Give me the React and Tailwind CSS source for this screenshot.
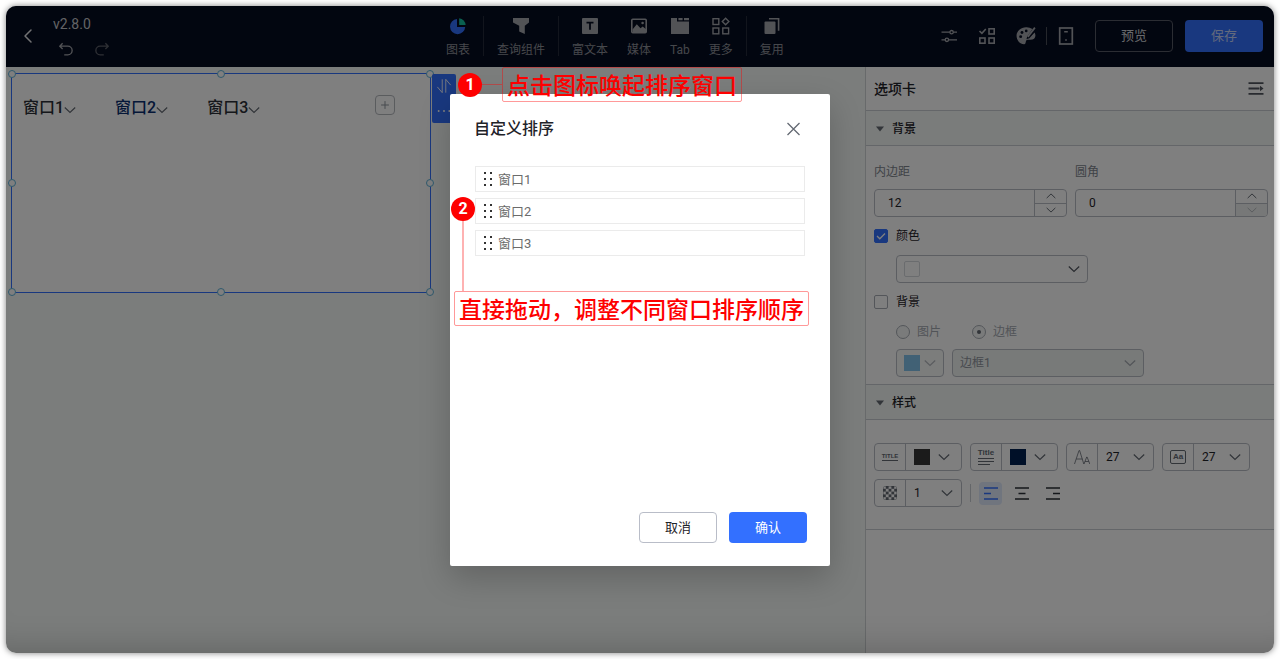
import { useState } from 'react';
import { ChevronLeft, Plus } from 'lucide-react';

const windows = ['窗口1', '窗口2', '窗口3'];

function Svg({ size = 18, className, children }) {
  return (
    <svg width={size} height={size} viewBox="0 0 18 18" fill="none" className={className} aria-hidden="true">
      {children}
    </svg>
  );
}

function Arrow({ size = 12, up, className }) {
  return (
    <svg width={size} height={size} viewBox="0 0 12 12" fill="none" className={className} aria-hidden="true">
      <path d={up ? 'M.8 8.5L6 3.5l5.2 5' : 'M.8 3.5L6 8.5l5.2-5'} stroke="currentColor" strokeWidth="1.2" />
    </svg>
  );
}

const ChartIcon = () => (
  <Svg>
    <path d="M8 2A7.6 7.6 0 1 0 16.2 10H8z" fill="#3370ff" />
    <path d="M10.2 1.2V8h6.4a7 7 0 0 0-6.4-6.8z" fill="#14c0a0" />
  </Svg>
);

const FilterIcon = () => (
  <Svg><path d="M1 1h16v4.4l-4.2 3.4V17l-5.6-2.6V8.8L1 5.4z" fill="currentColor" /></Svg>
);

const TextIcon = () => (
  <Svg>
    <rect x="1" y="1" width="16" height="16" rx="1" fill="currentColor" />
    <path d="M5.5 5.7h7M9 5.7v7" stroke="#050c20" strokeWidth="1.8" />
  </Svg>
);

const MediaIcon = () => (
  <Svg>
    <rect x="1.8" y="2.3" width="14.4" height="13.4" rx="1" stroke="currentColor" strokeWidth="1.6" />
    <path d="M2.5 12.5l4.3-5.2 3.7 4 2.2-1.8 3.3 2.8V16H2.5z" fill="currentColor" />
    <circle cx="12.6" cy="6" r="1.3" fill="currentColor" />
  </Svg>
);

const TabIcon = () => (
  <Svg><path d="M0 1h6v3.5h12V17H0zM7.4 1h4.2v2.2H7.4zM13 1h5v2.2h-5z" fill="currentColor" /></Svg>
);

const MoreIcon = () => (
  <Svg>
    <g stroke="currentColor" strokeWidth="1.4">
      <rect x="1" y="1.7" width="5.8" height="5.8" />
      <rect x="1" y="11" width="5.8" height="5.8" />
      <rect x="10.8" y="11" width="5.8" height="5.8" />
      <path d="M13.6 1.2l3.3 3.3-3.3 3.3-3.3-3.3z" />
    </g>
  </Svg>
);

const ReuseIcon = () => (
  <Svg>
    <rect x="1.5" y="4.5" width="11" height="12.5" rx="1" fill="currentColor" />
    <path d="M6 1.8h9.6v12" stroke="currentColor" strokeWidth="1.6" />
  </Svg>
);

const toolGroups = [
  [{ label: '图表', Icon: ChartIcon }],
  [{ label: '查询组件', Icon: FilterIcon }],
  [
    { label: '富文本', Icon: TextIcon },
    { label: '媒体', Icon: MediaIcon },
    { label: 'Tab', Icon: TabIcon },
    { label: '更多', Icon: MoreIcon },
  ],
  [{ label: '复用', Icon: ReuseIcon }],
];

function Header() {
  return (
    <header className="flex h-[61px] shrink-0 items-center bg-[#050c20] pb-0.5 pr-[11px] text-[#a4a6ad]">
      <div className="flex w-1/3 items-center pl-2.5">
        <button aria-label="返回" className="text-[#e4e5e8]">
          <ChevronLeft size={24} strokeWidth={1.5} />
        </button>
        <div className="ml-3 flex flex-col gap-2">
          <span className="pl-px text-sm leading-5 text-[#c4c6cb]">v2.8.0</span>
          <div className="flex gap-5 pl-1.5">
            <button aria-label="撤销">
              <Svg size={16}>
                <path d="M5.2 1.5L2 4.7l3.2 3.2M2 4.7h9a4.9 4.9 0 0 1 0 9.8H7" stroke="currentColor" strokeWidth="1.5" />
              </Svg>
            </button>
            <button aria-label="重做" className="text-[#5c5f69]">
              <Svg size={16}>
                <path d="M12.8 1.5L16 4.7l-3.2 3.2M16 4.7H7a4.9 4.9 0 0 0 0 9.8h4" stroke="currentColor" strokeWidth="1.5" />
              </Svg>
            </button>
          </div>
        </div>
      </div>

      <nav className="flex items-center pl-[21px]">
        {toolGroups.map((group, i) => (
          <div
            key={i}
            className={i > 0 ? 'ml-[13px] flex h-10 items-center gap-[19px] border-l border-[#242a3b] pl-[13px]' : 'flex h-10 items-center'}
          >
            {group.map(({ label, Icon }) => (
              <button key={label} className="flex flex-col items-center gap-1.5 pt-1 text-xs leading-[18px] text-[#8d9098]">
                <span className="text-[#a4a6ad]"><Icon /></span>
                {label}
              </button>
            ))}
          </div>
        ))}
      </nav>

      <div className="ml-auto flex items-center">
        <div className="flex items-center gap-5">
          <button aria-label="设置">
            <Svg>
              <g stroke="currentColor" strokeWidth="1.3">
                <path d="M1.5 5.2h8.3M13.4 5.2H17M1.5 12.8h3.6M8.7 12.8H17" />
                <circle cx="11.6" cy="5.2" r="1.7" />
                <circle cx="6.9" cy="12.8" r="1.7" />
              </g>
            </Svg>
          </button>
          <button aria-label="组件">
            <Svg>
              <g stroke="currentColor" strokeWidth="1.6">
                <path d="M1.5 4l2.4 2.4L7.8 2" />
                <rect x="11" y="1.8" width="5.2" height="5.2" />
                <rect x="1.8" y="11" width="5.2" height="5.2" />
                <rect x="11" y="11" width="5.2" height="5.2" />
              </g>
            </Svg>
          </button>
          <button aria-label="主题">
            <Svg size={20}>
              <path d="M9 1.2C4.5 1.2.5 4.6.5 8.8c0 4 3 7.6 6.7 7.6 1.7 0 1.4-1.7 1.8-2.9.5-1.3 1.7-1.1 4-1.1 2.7 0 4.5-1.3 4.5-3.8 0-1-.3-2-.8-2.8L12 11l-2.6 1 .8-2.8 4.6-6.5A10 10 0 0 0 9 1.2z" fill="currentColor" />
              <path d="M10.6 9.8L17 1.5" stroke="currentColor" strokeWidth="1.6" />
              <g fill="#050c20">
                <circle cx="4.2" cy="9.6" r="1.3" />
                <circle cx="5.4" cy="5.9" r="1.3" />
                <circle cx="9.2" cy="4.4" r="1.2" />
              </g>
            </Svg>
          </button>
        </div>
        <div className="mx-2.5 h-[18px] border-l border-[#4a4e59]" />
        <button aria-label="移动端">
          <Svg>
            <rect x="2.7" y="1" width="12.6" height="16" stroke="currentColor" strokeWidth="1.7" />
            <path d="M7.2 4.8h3.6M8.2 13h1.6" stroke="currentColor" strokeWidth="1.5" />
          </Svg>
        </button>
        <button className="ml-5 h-8 w-[78px] rounded border border-[#565a66] text-[13px] text-[#d0d2d8]">预览</button>
        <button className="ml-3 h-8 w-[78px] rounded bg-[#3370ff] text-[13px] text-[#c6d4fb]">保存</button>
      </div>
    </header>
  );
}

const handles = [
  '-left-1 -top-1',
  'left-1/2 -ml-1 -top-1',
  '-right-1 -top-1',
  '-left-1 top-1/2 -mt-1',
  '-right-1 top-1/2 -mt-1',
  '-left-1 -bottom-1',
  'left-1/2 -ml-1 -bottom-1',
  '-right-1 -bottom-1',
];

function Canvas() {
  return (
    <main className="min-w-0 flex-1 bg-[#f6faf8] p-[5px]">
      <section className="relative mt-px h-[220px] w-[420px] border border-[#3370ff] bg-white px-[11px] pt-5">
        <div className="flex items-center">
          <div className="flex gap-[39px]">
            {windows.map((name, i) => (
              <button
                key={name}
                className={i === 1 ? 'flex items-center text-base font-medium leading-7 text-[#0a2f70]' : 'flex items-center text-base font-medium leading-7 text-[#2b2f36]'}
              >
                {name}
                <Arrow className="mt-1 text-[#646a73]" />
              </button>
            ))}
          </div>
          <button aria-label="添加窗口" className="mb-1.5 ml-auto mr-6 flex size-5 items-center justify-center rounded-sm border border-[#b4b8bd] text-[#8f959e]">
            <Plus size={12} strokeWidth={2} />
          </button>
        </div>
        {handles.map((pos) => (
          <span key={pos} className={`absolute size-2 rounded-full border border-[#5fb4dc] bg-white ${pos}`} />
        ))}
        <div className="absolute -right-[26px] top-0 flex h-[49px] w-6 flex-col items-center justify-between rounded-xs bg-[#3370ff] py-1 text-white">
          <button aria-label="排序">
            <Svg size={16}>
              <path d="M7 1.5v15L1.5 10M11 16.5v-15L16.5 8" stroke="currentColor" strokeWidth="1" />
            </Svg>
          </button>
          <button aria-label="更多操作">
            <Svg size={16}>
              <g fill="currentColor">
                <circle cx="3" cy="9" r="1.1" />
                <circle cx="9" cy="9" r="1.1" />
                <circle cx="15" cy="9" r="1.1" />
              </g>
            </Svg>
          </button>
        </div>
      </section>
    </main>
  );
}

function SectionTitle({ children }) {
  return (
    <button className="flex h-[35px] w-full items-center gap-2 border-b border-[#c9cdd2] bg-[#f4f8f6] pl-2.5 pt-px text-xs font-medium text-[#1f2329]">
      <svg width="8" height="6" viewBox="0 0 8 6" aria-hidden="true"><path d="M0 .5h8l-4 5z" fill="#646a73" /></svg>
      {children}
    </button>
  );
}

function NumberField({ id, label, initial }) {
  const [value, setValue] = useState(initial);

  return (
    <div className="flex-1">
      <label htmlFor={id} className="block text-xs leading-[18px] text-[#80858e]">{label}</label>
      <div className="mt-2 flex h-7 overflow-hidden rounded border border-[#b9bdc5]">
        <input
          id={id}
          value={value}
          onChange={(e) => setValue(Number(e.target.value) || 0)}
          className="w-full min-w-0 flex-1 pl-[13px] text-xs text-[#1f2329] outline-none"
        />
        <div className="flex w-8 flex-col border-l border-[#b9bdc5] text-[#646a73]">
          <button aria-label={`${label}增加`} onClick={() => setValue(value + 1)} className="flex flex-1 items-center justify-center">
            <Arrow up size={10} />
          </button>
          <button
            aria-label={`${label}减少`}
            disabled={value === 0}
            onClick={() => setValue(value - 1)}
            className="flex flex-1 items-center justify-center border-t border-[#b9bdc5] disabled:bg-[#eef1f0] disabled:text-[#b4b8bd]"
          >
            <Arrow size={10} />
          </button>
        </div>
      </div>
    </div>
  );
}

function Checkbox({ label, defaultChecked }) {
  return (
    <label className="flex h-[18px] items-center gap-2 text-xs text-[#1f2329]">
      <span className="relative flex size-3.5">
        <input
          type="checkbox"
          defaultChecked={defaultChecked}
          className="peer size-3.5 appearance-none rounded-xs border border-[#a8adb5] bg-white checked:border-[#3370ff] checked:bg-[#3370ff]"
        />
        <svg viewBox="0 0 14 14" className="pointer-events-none absolute inset-0 hidden peer-checked:block" aria-hidden="true">
          <path d="M3 7l2.8 2.8L11 4.5" fill="none" stroke="#fff" strokeWidth="1.3" />
        </svg>
      </span>
      {label}
    </label>
  );
}

function Radio({ label, defaultChecked }) {
  return (
    <label className="flex items-center gap-[7px] text-xs text-[#a3a8b0]">
      <input
        type="radio"
        name="bg-type"
        disabled
        defaultChecked={defaultChecked}
        className="flex size-3.5 appearance-none items-center justify-center rounded-full border border-[#a8adb5] bg-[#f4f6f6] before:size-1 before:rounded-full checked:before:bg-[#646a73]"
      />
      {label}
    </label>
  );
}

// icon cell on the left, value and arrow on the right
function StyleBox({ icon, label, color, options }) {
  return (
    <div className="flex h-7 w-[88px] rounded border border-[#b9bdc5]">
      <span className="flex w-[31px] shrink-0 items-center justify-center border-r border-[#b9bdc5] text-[#646a73]">{icon}</span>
      {color ? (
        <button aria-label={label} className="flex flex-1 items-center justify-between pl-2 pr-[11px]">
          <span className={`size-4 ${color}`} />
          <Arrow className="text-[#646a73]" />
        </button>
      ) : (
        <div className="relative flex flex-1">
          <select aria-label={label} className="w-full appearance-none pl-2 text-xs text-[#1f2329] outline-none">
            {options.map((o) => <option key={o}>{o}</option>)}
          </select>
          <Arrow className="pointer-events-none absolute right-2 top-[7px] text-[#646a73]" />
        </div>
      )}
    </div>
  );
}

const TitleIcon = () => (
  <span className="border-b border-[#646a73] font-['Liberation_Sans',sans-serif] text-[6px] font-bold leading-[7px]">TITLE</span>
);

const TitleLinesIcon = () => (
  <span className="flex flex-col items-start">
    <span className="font-['Liberation_Sans',sans-serif] text-[8px] font-bold leading-[8px]">Title</span>
    <svg width="16" height="8" viewBox="0 0 16 8" aria-hidden="true">
      <path d="M0 1.5h16M0 4.5h16M0 7.5h12" stroke="currentColor" />
    </svg>
  </span>
);

const FontSizeIcon = () => (
  <svg width="16" height="16" viewBox="0 0 16 16" fill="none" stroke="currentColor" strokeWidth=".8" aria-hidden="true">
    <path d="M.5 15L5 1.5h.6L9.8 15M2.2 10h6.2M10 15l2.7-7h.4l2.7 7M11 12.5h3.8" />
  </svg>
);

const BoxedFontIcon = () => (
  <span className="flex h-3.5 w-4 items-center justify-center rounded-xs border border-[#646a73] font-['Liberation_Sans',sans-serif] text-[8px] font-bold leading-none">Aa</span>
);

const OpacityIcon = () => {
  const cells = [];
  for (let y = 0; y < 5; y++) {
    for (let x = 0; x < 5; x++) {
      if ((x + y) % 2 === 1) cells.push(<rect key={`${x}${y}`} x={x * 2.8} y={y * 2.8} width="2.8" height="2.8" fill="currentColor" />);
    }
  }
  return (
    <svg width="14" height="14" viewBox="0 0 14 14" aria-hidden="true">
      {cells}
      <rect x=".5" y=".5" width="13" height="13" rx="1" fill="none" stroke="currentColor" strokeWidth=".4" />
    </svg>
  );
};

const aligns = [
  { label: '左对齐', d: 'M0 1h14M0 6.5h7M0 12h14' },
  { label: '居中', d: 'M0 1h14M3.5 6.5h7M0 12h14' },
  { label: '右对齐', d: 'M0 1h14M7 6.5h7M0 12h14' },
];

function SettingsPanel() {
  const [align, setAlign] = useState('左对齐');

  return (
    <aside className="w-[409px] shrink-0 border-l border-[#d0d4d6] bg-white">
      <div className="flex h-11 items-center justify-between border-b border-[#c9cdd2] pl-2 pr-2.5">
        <h2 className="text-sm font-medium text-[#1f2329]">选项卡</h2>
        <button aria-label="收起面板">
          <svg width="16" height="13" viewBox="0 0 16 13" fill="none" aria-hidden="true">
            <path d="M.5 1.2h15M.5 6.5h11M.5 11.8h15" stroke="#50555e" strokeWidth="1.8" />
            <path d="M12 3.8l3.5 2.7L12 9.2z" fill="#50555e" />
          </svg>
        </button>
      </div>

      <SectionTitle>背景</SectionTitle>
      <div className="border-b border-[#c9cdd2] pb-[7px] pl-2 pr-1.5 pt-[17px]">
        <div className="flex gap-2">
          <NumberField id="padding" label="内边距" initial={12} />
          <NumberField id="radius" label="圆角" initial={0} />
        </div>
        <div className="mt-2.5">
          <Checkbox label="颜色" defaultChecked />
        </div>
        <button aria-label="颜色" className="ml-[22px] mt-2.5 flex h-7 w-48 items-center justify-between rounded border border-[#b9bdc5] pl-[7px] pr-[7px]">
          <span className="size-4 rounded-xs border border-[#d5d8dc]" />
          <Arrow className="text-[#50555e]" />
        </button>
        <div className="mt-2.5">
          <Checkbox label="背景" />
        </div>
        <div className="ml-[22px] mt-3 flex h-[18px] items-center gap-[31px]">
          <Radio label="图片" />
          <Radio label="边框" defaultChecked />
        </div>
        <div className="ml-[22px] mt-2 flex gap-2">
          <button disabled aria-label="边框颜色" className="flex h-7 w-12 items-center justify-between rounded border border-[#b9bdc5] bg-[#f8faf9] pl-[7px] pr-[7px]">
            <span className="size-4 bg-[#82c3ea]" />
            <Arrow className="text-[#b4b8bd]" />
          </button>
          <div className="relative w-48">
            <select aria-label="边框" disabled className="h-7 w-full appearance-none rounded border border-[#b9bdc5] bg-[#f0f4f2] pl-[7px] text-xs text-[#8f959e]">
              <option>边框1</option>
            </select>
            <Arrow className="pointer-events-none absolute right-2 top-2 text-[#a3a8b0]" />
          </div>
        </div>
      </div>

      <SectionTitle>样式</SectionTitle>
      <div className="flex flex-wrap gap-2 border-b border-[#c9cdd2] pb-[22px] pl-2 pt-[23px]">
        <StyleBox icon={<TitleIcon />} label="标题颜色" color="bg-[#373737]" />
        <StyleBox icon={<TitleLinesIcon />} label="选中标题颜色" color="bg-[#002050]" />
        <StyleBox icon={<FontSizeIcon />} label="字号" options={[27, 28]} />
        <StyleBox icon={<BoxedFontIcon />} label="选中字号" options={[27, 28]} />
        <StyleBox icon={<OpacityIcon />} label="透明度" options={[1, 2]} />
        <div className="flex items-center gap-2">
          <div className="h-[18px] border-l border-[#c9cdd2]" />
          {aligns.map(({ label, d }) => (
            <button
              key={label}
              aria-label={label}
              onClick={() => setAlign(label)}
              className={align === label ? 'flex size-[23px] items-center justify-center rounded-sm bg-[#e1eafc] text-[#3370ff]' : 'flex size-[23px] items-center justify-center text-[#2b2f36]'}
            >
              <svg width="14" height="13" viewBox="0 0 14 13" aria-hidden="true">
                <path d={d} stroke="currentColor" strokeWidth="1.5" />
              </svg>
            </button>
          ))}
        </div>
      </div>
    </aside>
  );
}

function SortDialog() {
  return (
    <div role="dialog" aria-label="自定义排序" className="relative flex h-[472px] w-[380px] flex-col rounded-xs bg-white shadow-[0_12px_32px_rgba(0,0,0,0.2)]">
      <div className="flex items-center justify-between pl-6 pr-[29px] pt-[23px]">
        <h1 className="text-base font-medium leading-6 text-[#1f2329]">自定义排序</h1>
        <button aria-label="关闭" className="text-[#646a73]">
          <svg width="15" height="15" viewBox="0 0 15 15" aria-hidden="true">
            <path d="M1.5 1l12 12M13.500 1l-12 12" stroke="currentColor" strokeWidth="1.3" />
          </svg>
        </button>
      </div>
      <ul className="mx-[25px] mt-[25px] flex flex-col gap-1.5">
        {windows.map((name) => (
          <li key={name} className="flex h-[26px] items-center gap-[5px] border border-[#ebebeb] pl-2 text-[13px] text-[#6b6b6b]">
            <svg width="9" height="15" viewBox="0 0 9 15" fill="#333" aria-hidden="true">
              <path d="M0 0h2v2H0zM6 0h2v2H6zM0 6h2v2H0zM6 6h2v2H6zM0 12h2v2H0zM6 12h2v2H6z" />
            </svg>
            <span className="pt-0.5">{name}</span>
          </li>
        ))}
      </ul>
      <div className="mt-auto flex justify-end gap-3 px-[23px] pb-[23px]">
        <button className="h-[31px] w-[78px] rounded border border-[#b9bdc8] text-[13px] text-[#1f2329]">取消</button>
        <button className="h-[31px] w-[78px] rounded bg-[#3370ff] text-[13px] text-white">确认</button>
      </div>

      {/* guide callouts */}
      <div className="absolute -top-[27px] left-2 flex items-center">
        <span className="flex size-6 items-center justify-center rounded-full bg-[#fe0000] text-base font-bold text-white">1</span>
        <span className="w-5 border-t border-[#fe0000]/40" />
        <p className="flex h-[35px] items-center whitespace-nowrap rounded-xs border border-[#fe0000]/40 px-1 pt-1 text-[23px] font-medium leading-8 text-[#fe0000]">
          点击图标唤起排序窗口
        </p>
      </div>
      <div className="absolute left-1 top-[103px] flex flex-col items-start">
        <span className="-ml-[3px] flex size-6 items-center justify-center rounded-full bg-[#fe0000] text-base font-bold text-white">2</span>
        <span className="ml-2 h-[70px] border-l-2 border-[#fe0000]/30" />
        <p className="flex h-[35px] items-center whitespace-nowrap rounded-xs border border-[#fe0000]/40 px-1 pt-1 text-[23px] font-medium leading-8 text-[#fe0000]">
          直接拖动，调整不同窗口排序顺序
        </p>
      </div>
    </div>
  );
}

export default function App() {
  return (
    <div className="flex min-h-screen bg-white p-1.5 font-[Roboto,'Noto_Sans_CJK_SC',sans-serif]">
      <div className="relative flex min-w-0 flex-1 flex-col overflow-hidden rounded-[10px] shadow-[0_0_6px_rgba(0,0,0,0.5)]">
        <Header />
        <div className="flex flex-1">
          <Canvas />
          <SettingsPanel />
        </div>
        <div className="absolute inset-0 flex items-start justify-center bg-black/50 pt-[88px] shadow-[inset_0_-34px_34px_-30px_rgba(0,0,0,0.2)]">
          <SortDialog />
        </div>
      </div>
    </div>
  );
}
